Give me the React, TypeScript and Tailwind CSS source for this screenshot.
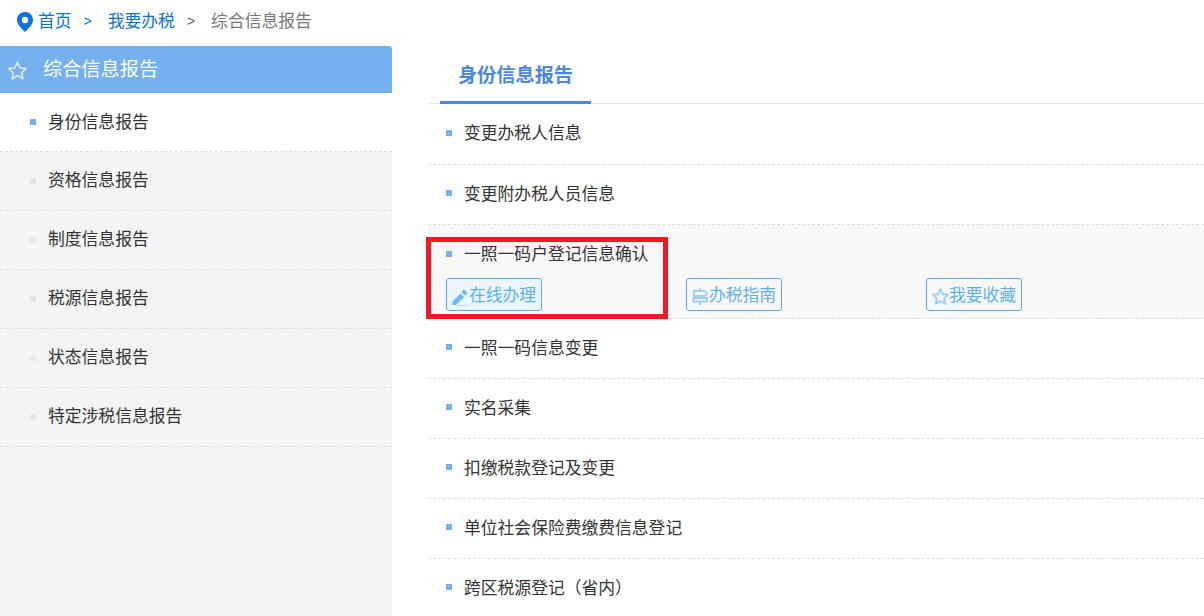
const FONT = "font-['Liberation_Sans','Noto_Sans_CJK_SC',sans-serif]";

const sideItems = ['身份信息报告', '资格信息报告', '制度信息报告', '税源信息报告', '状态信息报告', '特定涉税信息报告'];
const topRows = ['变更办税人信息', '变更附办税人员信息'];
const bottomRows = ['一照一码信息变更', '实名采集', '扣缴税款登记及变更', '单位社会保险费缴费信息登记', '跨区税源登记（省内）'];

function Row({ label, first }: { label: string; first?: boolean }) {
  return (
    <div
      className={`flex shrink-0 items-center border-b border-dashed border-[#dddddd] pl-[18px] text-[16.8px] text-[#333333] ${
        first ? 'h-[61px]' : 'h-[60px]'
      }`}
    >
      <span className="mb-[3px] mr-[12px] h-[6px] w-[6px] bg-[#75b0ef]" />
      {label}
    </div>
  );
}

function PencilIcon() {
  return (
    <svg width="17" height="17" viewBox="0 0 17 17" className="mt-[3px] shrink-0">
      <path d="M0.5 12.5 L0.5 16 L4 16 L12 8 L8.5 4.5 Z M9.8 3.2 L13.3 6.7 L15 5 C15.4 4.5 15.4 3.8 15 3.4 L12.6 1 C12.2 0.6 11.5 0.6 11 1 Z" fill="#6db8f7" />
      <path d="M6 16.5 H15" stroke="#a9d5f9" strokeWidth="1" />
    </svg>
  );
}

function GuideIcon() {
  return (
    <svg width="17" height="17" viewBox="0 0 17 17" className="mt-[2px] shrink-0" fill="none" stroke="#8ec8f7" strokeWidth="2">
      <path d="M2 3 H13 L15 5.5 L13 8 H2 Z" opacity="0.85" />
      <path d="M1.5 10 H15 V13.5 H1.5 Z" opacity="0.85" />
      <path d="M8 0.5 V2.5 M8 14 V17" />
    </svg>
  );
}

function StarIcon({ color, size, width, className }: { color: string; size: number; width: number; className?: string }) {
  return (
    <svg width={size} height={size} viewBox="1 1 22 22" className={`shrink-0 ${className ?? ''}`} fill="none" stroke={color} strokeWidth={width} strokeLinejoin="round">
      <path d="M12 2.5 L15 9 L22 9.8 L16.8 14.6 L18.2 21.5 L12 18 L5.8 21.5 L7.2 14.6 L2 9.8 L9 9 Z" />
    </svg>
  );
}

function ActionButton({ label, active, icon }: { label: string; active?: boolean; icon: React.ReactNode }) {
  return (
    <div
      className={`flex h-[33px] w-[96px] items-center rounded-[3px] border border-[#55aef5] pl-[5px] pt-[2px] text-[16.8px] text-[#5eb0f3] ${
        active ? 'bg-[#eaf5ff]' : ''
      }`}
    >
      {icon}
      {label}
    </div>
  );
}

export default function App() {
  return (
    <div className={`h-[616px] w-[1204px] overflow-hidden bg-white ${FONT}`}>
      {/* Breadcrumb */}
      <div className="flex h-[46px] items-center pb-[3px] pl-[16px] text-[16.8px] text-[#0b72d6]">
        <svg width="18" height="22" viewBox="0 0 18 22" className="mr-[4px] shrink-0">
          <path d="M9 1 C4.4 1 1 4.5 1 9 C1 13.5 5.5 17.5 9 21 C12.5 17.5 17 13.5 17 9 C17 4.5 13.6 1 9 1 Z" fill="#0b72e0" />
          <circle cx="9" cy="9" r="3.2" fill="white" />
        </svg>
        <span>首页</span>
        <span className="ml-[12px] mr-[16px] text-[14px]">&gt;</span>
        <span>我要办税</span>
        <span className="ml-[12px] mr-[16px] text-[14px] text-[#666666]">&gt;</span>
        <span className="text-[#777777]">综合信息报告</span>
      </div>

      <div className="flex">
        {/* Sidebar */}
        <div className="h-[570px] w-[392px] shrink-0 bg-[#f4f4f4]">
          <div className="flex h-[47px] items-center rounded-tr-[3px] bg-[#75b0ef] pl-[8px] pt-[2px] text-[19.2px] text-white">
            <StarIcon color="#e3effb" size={19} width={1.8} />
            <span className="ml-[16px]">综合信息报告</span>
          </div>
          {sideItems.map((item, i) => (
            <div
              key={item}
              className={`flex h-[59px] items-center border-b border-dashed border-[#dddddd] pl-[30px] text-[16.8px] text-[#333333] ${
                i === 0 ? 'bg-white pt-[2px]' : ''
              }`}
            >
              <span className={`mr-[12px] h-[6px] w-[6px] ${i === 0 ? 'mb-[2px] bg-[#75b0ef]' : 'bg-[#e6e7ec]'}`} />
              {item}
            </div>
          ))}
        </div>

        {/* Content */}
        <div className="relative ml-[36px] flex-1">
          <div className="flex h-[58px] border-b border-[#e6e6e6] pl-[12px]">
            <div className="flex h-[58px] w-[151px] items-center justify-center border-b-[3px] border-[#4a86e8] pt-[5px] text-[19.2px] font-bold text-[#4a86e8]">
              身份信息报告
            </div>
          </div>

          {topRows.map((r, i) => (
            <Row key={r} label={r} first={i === 0} />
          ))}

          <div className="h-[94px] border-b border-dashed border-[#dddddd] bg-[#f8f8f8] pl-[18px]">
            <div className="flex h-[53px] items-center pt-[7px] text-[16.8px] text-[#333333]">
              <span className="mb-[3px] mr-[12px] h-[6px] w-[6px] bg-[#75b0ef]" />
              一照一码户登记信息确认
            </div>
            <div className="grid grid-cols-[240px_240px_240px]">
              <ActionButton label="在线办理" active icon={<PencilIcon />} />
              <ActionButton label="办税指南" icon={<GuideIcon />} />
              <ActionButton label="我要收藏" icon={<StarIcon color="#a5d4fa" size={17} width={2.8} className="mt-[1px]" />} />
            </div>
          </div>

          {bottomRows.map(r => (
            <Row key={r} label={r} />
          ))}

          {/* Red annotation box */}
          <div className="absolute left-[-2px] top-[191px] h-[82px] w-[242px] border-[5px] border-[#ed1c24]" />
        </div>
      </div>
    </div>
  );
}
